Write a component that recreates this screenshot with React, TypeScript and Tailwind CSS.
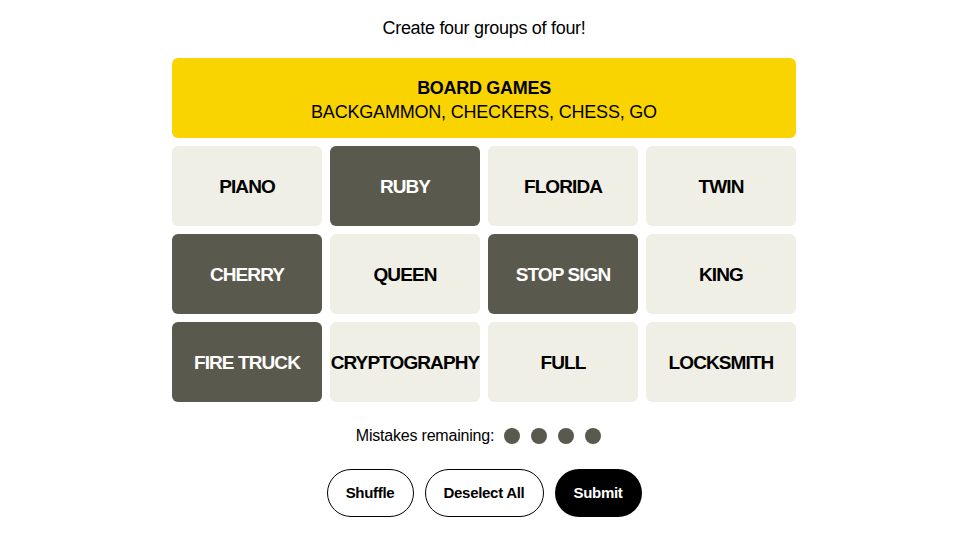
const tiles: { word: string; selected: boolean }[] = [
  { word: "PIANO", selected: false },
  { word: "RUBY", selected: true },
  { word: "FLORIDA", selected: false },
  { word: "TWIN", selected: false },
  { word: "CHERRY", selected: true },
  { word: "QUEEN", selected: false },
  { word: "STOP SIGN", selected: true },
  { word: "KING", selected: false },
  { word: "FIRE TRUCK", selected: true },
  { word: "CRYPTOGRAPHY", selected: false },
  { word: "FULL", selected: false },
  { word: "LOCKSMITH", selected: false },
];

export default function App() {
  return (
    <div
      className="w-[971px] h-[547px] bg-white flex flex-col items-center pr-[3px] text-black"
      style={{ fontFamily: '"Liberation Sans", Arial, sans-serif' }}
    >
      <p className="mt-[16px] h-[24px] text-[18px] leading-[24px] tracking-[-0.3px]">
        Create four groups of four!
      </p>

      <div className="mt-[18px] w-[624px] flex flex-col gap-[8px]">
        <div className="h-[80px] pt-[4px] rounded-[6px] bg-[#f9d400] flex flex-col items-center justify-center">
          <div className="text-[18px] leading-[24px] font-bold tracking-[-0.3px]">BOARD GAMES</div>
          <div className="text-[18px] leading-[24px] tracking-[-0.2px]">
            BACKGAMMON, CHECKERS, CHESS, GO
          </div>
        </div>

        <div className="grid grid-cols-4 gap-[8px]">
          {tiles.map((t) => (
            <button
              key={t.word}
              className={
                "h-[80px] pt-[3px] rounded-[6px] flex items-center justify-center whitespace-nowrap font-bold text-[19px] tracking-[-0.9px] " +
                (t.selected ? "bg-[#5a594e] text-white" : "bg-[#efefe6] text-black")
              }
            >
              {t.word}
            </button>
          ))}
        </div>
      </div>

      <div className="mt-[24px] mr-[11px] flex items-center h-[20px]">
        <span className="text-[16px] tracking-[-0.2px] mr-[10px]">Mistakes remaining:</span>
        <div className="flex gap-[11px]">
          {[0, 1, 2, 3].map((i) => (
            <span key={i} className="w-[16px] h-[16px] rounded-full bg-[#5a594e]" />
          ))}
        </div>
      </div>

      <div className="mt-[23px] flex gap-[11px]">
        <button className="w-[87px] h-[48px] rounded-full border border-black text-[15px] font-semibold tracking-[-0.3px]">
          Shuffle
        </button>
        <button className="w-[119px] h-[48px] rounded-full border border-black text-[15px] font-semibold tracking-[-0.3px]">
          Deselect All
        </button>
        <button className="w-[87px] h-[48px] rounded-full bg-black text-white text-[15px] font-bold tracking-[-0.3px]">
          Submit
        </button>
      </div>
    </div>
  );
}
